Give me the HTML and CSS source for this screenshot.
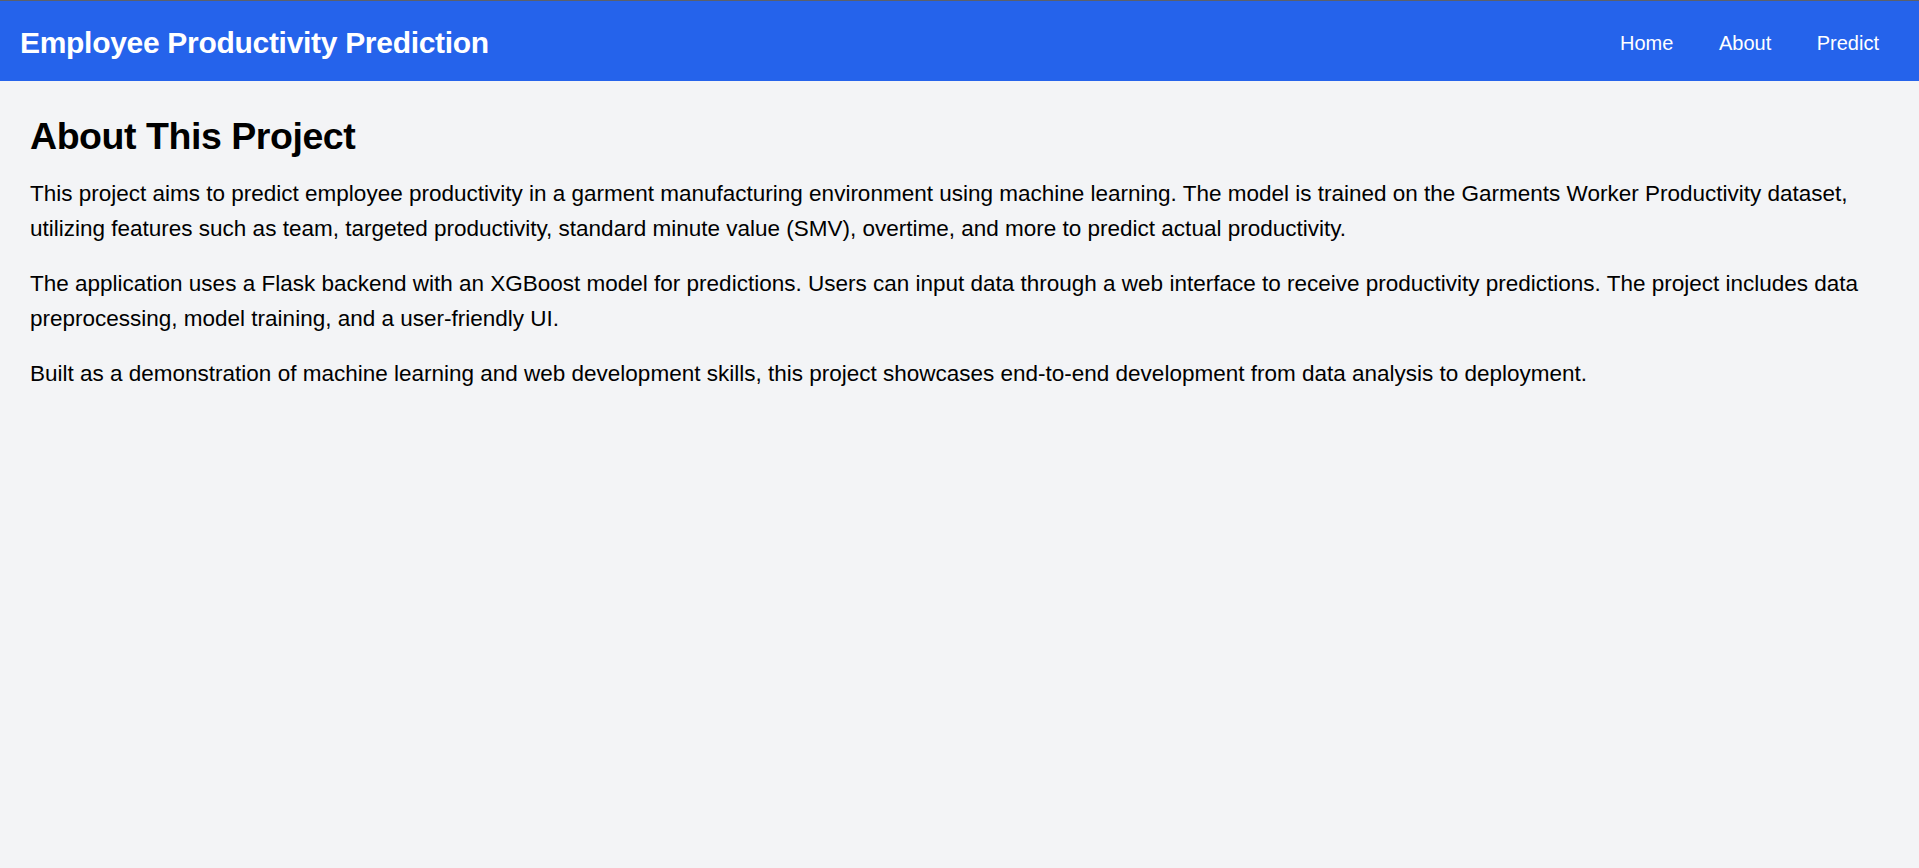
FILE: index.html
```html
<!DOCTYPE html>
<html lang="en">
<head>
<meta charset="utf-8">
<title>Employee Productivity Prediction</title>
<link rel="stylesheet" href="styles.css">
</head>
<body>
<nav class="navbar">
  <div class="brand">Employee Productivity Prediction</div>
  <div class="nav-links">
    <a class="nav-link" href="#">Home</a>
    <a class="nav-link" href="#">About</a>
    <a class="nav-link" href="#">Predict</a>
  </div>
</nav>
<main class="container">
  <h1 class="page-title">About This Project</h1>
  <p class="text">This project aims to predict employee productivity in a garment manufacturing environment using machine learning. The model is trained on the Garments Worker Productivity dataset, utilizing features such as team, targeted productivity, standard minute value (SMV), overtime, and more to predict actual productivity.</p>
  <p class="text">The application uses a Flask backend with an XGBoost model for predictions. Users can input data through a web interface to receive productivity predictions. The project includes data preprocessing, model training, and a user-friendly UI.</p>
  <p class="text">Built as a demonstration of machine learning and web development skills, this project showcases end-to-end development from data analysis to deployment.</p>
</main>
</body>
</html>
```
FILE: styles.css
```css
html, body {
  margin: 0;
  padding: 0;
}
body {
  background: #f3f4f6;
  border-top: 1px solid #5b606b;
  min-height: 867px;
  font-family: "Liberation Sans", Arial, sans-serif;
  color: #000;
}
.navbar {
  background: #2563eb;
  color: #fff;
  display: flex;
  justify-content: space-between;
  align-items: center;
  padding: 22px 20px 18px 20px;
}
.brand {
  font-size: 30px;
  font-weight: 700;
  line-height: 40px;
  letter-spacing: -0.3px;
}
.nav-links {
  font-size: 20px;
  line-height: 30px;
}
.nav-link {
  color: #fff;
  text-decoration: none;
  padding: 0 20px;
}
.container {
  padding: 30px;
}
.page-title {
  font-size: 37.5px;
  font-weight: 700;
  line-height: 45px;
  letter-spacing: -0.45px;
  margin: 0 0 17px 0;
  padding-top: 3px;
}
.text {
  font-size: 22.5px;
  line-height: 35px;
  margin: 0 0 20px 0;
}
```
